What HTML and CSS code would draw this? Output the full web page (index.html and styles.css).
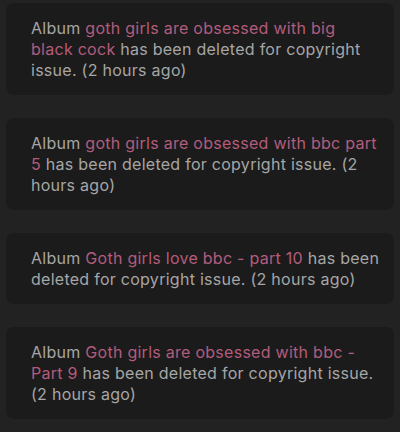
FILE: index.html
```html
<!DOCTYPE html>
<html lang="en">
<head>
    <meta charset="UTF-8">
    <meta name="viewport" content="width=device-width, initial-scale=1.0">
    <title>Notifications</title>
    <link rel="stylesheet" href="styles.css">
</head>
<body>

    <div class="lista">
        <div class="aviso">
            <p>Album <a href="#">goth girls are obsessed with big black cock</a> has been deleted for copyright issue. (2 hours ago)</p>
        </div>
        <div class="aviso">
            <p>Album <a href="#">goth girls are obsessed with bbc part 5</a> has been deleted for copyright issue. (2 hours ago)</p>
        </div>
        <div class="aviso">
            <p>Album <a href="#">Goth girls love bbc - part 10</a> has been deleted for copyright issue. (2 hours ago)</p>
        </div>
        <div class="aviso">
            <p>Album <a href="#">Goth girls are obsessed with bbc - Part 9</a> has been deleted for copyright issue. (2 hours ago)</p>
        </div>
    </div>

</body>
</html>
```
FILE: styles.css
```css
body {
    background: #222222;
    font-family: Inter, "Noto Sans", sans-serif;
    margin: 0;
    color: #a6a6a6;
}

.lista {
    display: flex;
    flex-direction: column;
    gap: 23px;
    padding: 3px 6px 0 6px;
}

.aviso {
    background: #1b1b1b;
    border-radius: 8px;
    padding: 15px 14px 14px 25px;
}

.aviso p {
    margin: 0;
    font-size: 16px;
    line-height: 21px;
    letter-spacing: 0.27px;
}

.aviso a {
    color: #b35c7d;
    text-decoration: none;
}
```
